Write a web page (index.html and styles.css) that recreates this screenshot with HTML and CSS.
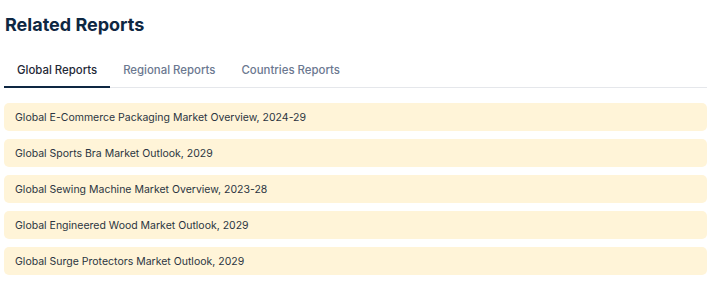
FILE: index.html
```html
<!DOCTYPE html>
<html>
<head>
<meta charset="utf-8">
<link rel="stylesheet" href="styles.css">
</head>
<body>
<section class="related">
  <h2 class="title">Related Reports</h2>
  <div class="tabs">
    <div class="tab active">Global Reports</div>
    <div class="tab">Regional Reports</div>
    <div class="tab">Countries Reports</div>
  </div>
  <ul class="list">
    <li class="item">Global E-Commerce Packaging Market Overview, 2024-29</li>
    <li class="item">Global Sports Bra Market Outlook, 2029</li>
    <li class="item">Global Sewing Machine Market Overview, 2023-28</li>
    <li class="item">Global Engineered Wood Market Outlook, 2029</li>
    <li class="item">Global Surge Protectors Market Outlook, 2029</li>
  </ul>
</section>
</body>
</html>
```
FILE: styles.css
```css
html, body {
  margin: 0;
  padding: 0;
  background: #ffffff;
}
body {
  font-family: "Inter", "Liberation Sans", sans-serif;
}
.related {
  padding: 12px 2px 0 4px;
}
.title {
  margin: 0 0 0 1px;
  font-size: 18px;
  line-height: 26px;
  font-weight: 700;
  color: #0e2742;
}
.tabs {
  display: flex;
  margin-top: 18px;
  border-bottom: 1px solid #e5e7eb;
}
.tab {
  padding: 6px 13px 8px;
  font-size: 11.4px;
  line-height: 16px;
  font-weight: 500;
  color: #6b7890;
  border-bottom: 2px solid transparent;
  margin-bottom: -1px;
}
.tab.active {
  color: #1f2937;
  border-bottom-color: #0e2742;
}
.list {
  list-style: none;
  margin: 15px 0 0 0;
  padding: 0;
  display: flex;
  flex-direction: column;
  gap: 8px;
}
.item {
  background: #fff4d8;
  border-radius: 5px;
  height: 28px;
  display: flex;
  align-items: center;
  padding: 0 11px;
  font-size: 10.5px;
  color: #2b3441;
}
```
